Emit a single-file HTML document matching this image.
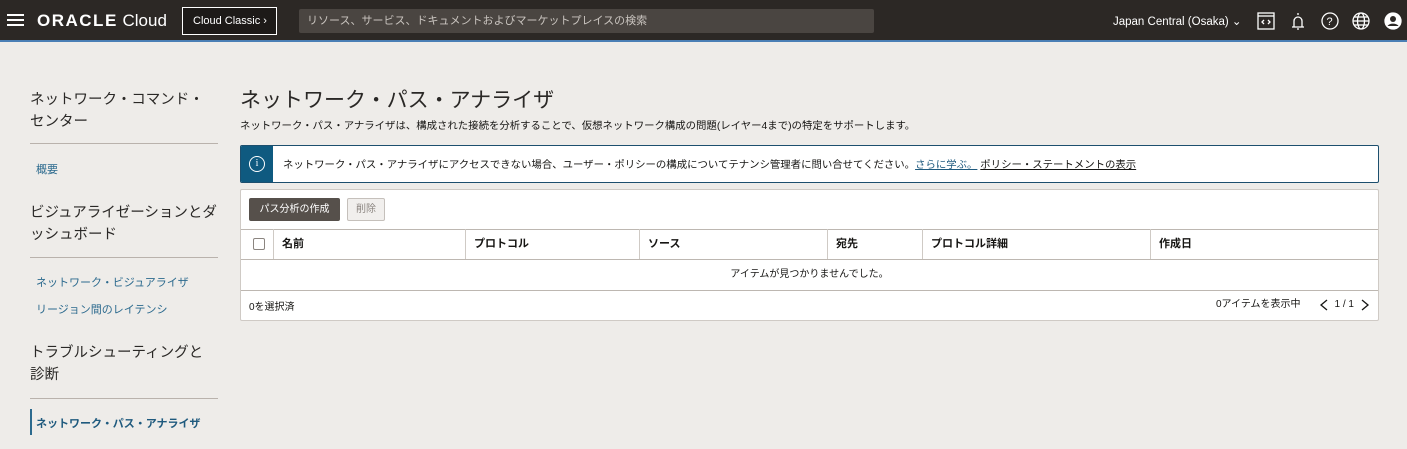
<!DOCTYPE html>
<html><head><meta charset="utf-8"><style>
*{margin:0;padding:0;box-sizing:border-box}
body{width:1407px;height:449px;overflow:hidden;background:#eeece9;font-family:"Liberation Sans","Noto Sans CJK JP",sans-serif;color:#161513;position:relative}
.hdr{position:absolute;left:0;top:0;width:1407px;height:42px;background:#2c2825;border-bottom:2px solid #4a7fb5}
.abs{position:absolute}
.side h2{font-weight:400;font-size:14.5px;line-height:22px;color:#2a2826;white-space:nowrap}
.side hr{border:0;border-top:1px solid #b9b2ac;position:absolute;left:30px;width:188px}
.link{color:#2c6a8e;font-size:11px;position:absolute;left:36px}
.col{position:absolute;top:229px;height:30px;border-left:1px solid #cfcac5;font-size:11px;font-weight:700;line-height:30px;padding-left:8px}
</style></head><body>
<div class="hdr">
 <div class="abs" style="left:7px;top:14px;width:17px;height:2px;background:#fff;box-shadow:0 5px 0 #fff,0 10px 0 #fff"></div>
 <div class="abs" style="left:37px;top:11px;color:#fff;font-size:17px;line-height:20px"><span style="letter-spacing:1.5px;font-weight:700;display:inline-block">ORACLE</span> Cloud</div>
 <div class="abs" style="left:182px;top:7px;width:95px;height:28px;border:1px solid #fff;background:#1d1a18;color:#fff;font-size:11px;line-height:26px;padding-left:10px">Cloud Classic ›</div>
 <div class="abs" style="left:299px;top:9px;width:575px;height:24px;background:#4a4541;border-radius:2px;color:#c9c4bf;font-size:11px;line-height:24px;padding-left:8px">リソース、サービス、ドキュメントおよびマーケットプレイスの検索</div>
 <div class="abs" style="left:1113px;top:14px;color:#fff;font-size:11.5px">Japan Central (Osaka) ⌄</div>
 <svg class="abs" style="left:1256px;top:11px" width="150" height="22" fill="none" stroke="#fff" stroke-width="1.3">
  <rect x="2" y="2" width="16" height="16"/><line x1="2" y1="5" x2="18" y2="5"/><path d="M8 9l-2 2 2 2M12 9l2 2-2 2"/>
  <path d="M36 16h12M38 16v-6a4 4 0 0 1 8 0v6M41 18h2M42 2v2"/>
  <circle cx="74" cy="10" r="8"/><text x="70.5" y="14" fill="#fff" stroke="none" font-size="11" font-family="Liberation Sans">?</text>
  <circle cx="105" cy="10" r="8"/><ellipse cx="105" cy="10" rx="3.5" ry="8"/><line x1="97" y1="10" x2="113" y2="10"/><line x1="98.5" y1="6" x2="111.5" y2="6"/><line x1="98.5" y1="14" x2="111.5" y2="14"/>
  <circle cx="137" cy="10" r="8" fill="#fff"/><circle cx="137" cy="8" r="3" fill="#2c2825" stroke="none"/><path d="M131.5 15a6 4 0 0 1 11 0" fill="#2c2825" stroke="none"/>
 </svg>
</div>
<div class="side">
 <h2 class="abs" style="left:30px;top:89px">ネットワーク・コマンド・<br>センター</h2>
 <hr style="top:143px">
 <div class="link" style="top:161px">概要</div>
 <h2 class="abs" style="left:30px;top:202px">ビジュアライゼーションとダ<br>ッシュボード</h2>
 <hr style="top:257px">
 <div class="link" style="top:274px">ネットワーク・ビジュアライザ</div>
 <div class="link" style="top:301px">リージョン間のレイテンシ</div>
 <h2 class="abs" style="left:30px;top:342px">トラブルシューティングと<br>診断</h2>
 <hr style="top:398px">
 <div class="abs" style="left:30px;top:409px;height:26px;border-left:2px solid #2c6a8e"></div>
 <div class="link" style="top:415px;font-weight:700;color:#1f5a7e">ネットワーク・パス・アナライザ</div>
</div>
<div class="abs" style="left:240px;top:84px;font-size:21px;color:#2a2826">ネットワーク・パス・アナライザ</div>
<div class="abs" style="left:240px;top:117px;font-size:10.4px">ネットワーク・パス・アナライザは、構成された接続を分析することで、仮想ネットワーク構成の問題(レイヤー4まで)の特定をサポートします。</div>
<div class="abs" style="left:240px;top:145px;width:1139px;height:38px;background:#fff;border:1px solid #1d4f6e;border-radius:2px;overflow:hidden">
 <div class="abs" style="left:0;top:0;width:32px;height:36px;background:#0f5a80"></div>
 <div class="abs" style="left:8px;top:10px;width:16px;height:16px;border:1.3px solid #fff;border-radius:50%;color:#fff;font-size:10px;text-align:center;line-height:14px;font-family:'Liberation Serif',serif">i</div>
 <div class="abs" style="left:42px;top:10px;font-size:10.4px">ネットワーク・パス・アナライザにアクセスできない場合、ユーザー・ポリシーの構成についてテナンシ管理者に問い合せてください。<span style="color:#1f5a7e;text-decoration:underline">さらに学ぶ。</span> <span style="text-decoration:underline">ポリシー・ステートメントの表示</span></div>
</div>
<div class="abs" style="left:240px;top:189px;width:1139px;height:132px;background:#fff;border:1px solid #cfcac5;border-radius:2px">
 <div class="abs" style="left:8px;top:8px;width:91px;height:23px;background:#56504b;border-radius:2px;color:#fff;font-size:10px;line-height:23px;text-align:center">パス分析の作成</div>
 <div class="abs" style="left:106px;top:8px;width:38px;height:23px;background:#f1efed;border:1px solid #c5c0bb;border-radius:2px;color:#8b8580;font-size:10px;line-height:21px;text-align:center">削除</div>
 <div class="abs" style="left:0;top:39px;width:1137px;height:31px;border-top:1px solid #bdb7b1;border-bottom:1px solid #bdb7b1"></div>
 <div class="abs" style="left:12px;top:48px;width:12px;height:12px;border:1px solid #8b8580;border-radius:2px"></div>
 <div class="abs" style="left:0;top:70px;width:1137px;height:31px;border-bottom:1px solid #bdb7b1;font-size:10px;text-align:center;line-height:30px">アイテムが見つかりませんでした。</div>
 <div class="abs" style="left:8px;top:108px;font-size:10px">0を選択済</div>
 <div class="abs" style="right:8px;top:107px;height:16px;font-size:10px;line-height:16px;display:flex;align-items:center;gap:6px"><span>0アイテムを表示中</span><span style="width:6px"></span><svg width="10" height="14" fill="none" stroke="#161513" stroke-width="1.3"><path d="M8 2L2 7l6 5"/></svg><span>1 / 1</span><svg width="10" height="14" fill="none" stroke="#161513" stroke-width="1.3"><path d="M2 2l6 5-6 5"/></svg></div>
</div>
<div class="col" style="left:273px;width:192px">名前</div>
<div class="col" style="left:465px;width:174px">プロトコル</div>
<div class="col" style="left:639px;width:188px">ソース</div>
<div class="col" style="left:827px;width:95px">宛先</div>
<div class="col" style="left:922px;width:228px">プロトコル詳細</div>
<div class="col" style="left:1150px;width:228px">作成日</div>
</body></html>
